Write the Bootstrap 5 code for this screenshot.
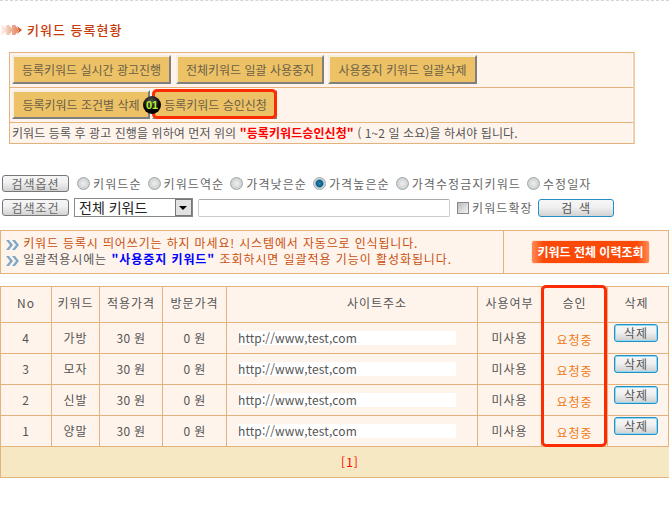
<!DOCTYPE html>
<html lang="ko"><head><meta charset="utf-8"><title>키워드 등록현황</title>
<link href="https://cdn.jsdelivr.net/npm/bootstrap@5.3.0/dist/css/bootstrap.min.css" rel="stylesheet">
<style>
html,body{margin:0;background:#fff}
body{width:669px;height:522px;overflow:hidden;font:12px/14px "Noto Sans CJK KR","Liberation Sans",sans-serif;color:#555;position:relative}
.topline{border-top:1px dashed #d4d4d4;height:22px}
.pagetitle{height:30px;font-weight:500;font-size:13px;line-height:16px;color:#c63c0c;gap:4px;letter-spacing:1px}
.titleicon{margin-top:1px}
.panel-box{margin-left:9px;width:626px;height:92px;border:1px solid #e3b27d;border-right:2px solid #f0cfa8;background:#fff4ec;box-shadow:inset -1px 0 #fff}
.panel-row{height:35px;padding:2px 0 0 2px;border-bottom:1px solid #e3b27d;gap:5px}
.panel-row2{gap:0;position:relative}
.panel-note{height:20px;line-height:19px;padding-left:2px;white-space:nowrap;color:#555;letter-spacing:.08px}
.panel-note b{color:#f00}
.bevel{height:29px;background:#edc267;color:#6a5f45;border:2px solid;border-color:#f6eee0 #7f7f7f #7f7f7f #f6eee0;font-size:12px;padding:0;line-height:24px;border-radius:0;text-align:center}
.w1{width:159px}.w2{width:148px}.w3{width:149px;margin-left:-1px}.w4{width:138px}.w5{width:125px;margin-left:2px;padding-left:2px}
.redmark{position:absolute;border:3px solid #fb2c04;border-radius:5px;pointer-events:none}
.mark-a{left:142px;top:1px;width:125px;height:30px}
.num-dot{position:absolute;left:133px;top:8px;width:18px;height:18px;border-radius:50%;background:radial-gradient(circle at 45% 30%,#555,#000 60%);color:#b6f52b;font:bold 11px/18px "Liberation Sans",sans-serif;text-align:center}
.search-row{gap:5px;margin-left:2px;height:17px}
.s1{margin-top:31px}.s2{margin-top:6px;height:19px}
.gbtn{height:17px;width:67px;margin-right:2px;padding:0;border:1px solid #777;border-radius:3px;background:linear-gradient(#f6f6f6,#f0f0f0 45%,#d2d2d2);color:#666;font-size:12px;line-height:14px;letter-spacing:1px}
.gopt{gap:3px;color:#666;margin-left:1px;white-space:nowrap;letter-spacing:1.1px}
.rad{appearance:none;width:13px;height:13px;border-radius:50%;border:1px solid #9aa;background:radial-gradient(circle,#eee,#c4c4c4);margin:0}
.rad:checked{background:radial-gradient(circle,#2a8fc0 0,#0a5a88 40%,#d8d8d8 60%)}
.kwsel{width:119px;height:19px;margin-left:-2px;border:1px solid #888;background:#fff;font-size:14px;line-height:17px;color:#222;padding-left:4px;position:relative;white-space:nowrap}
.kwsel i{position:absolute;right:0;top:0;width:17px;height:17px;background:#e2e2e2;border:1px solid #777}
.kwsel i::after{content:"";position:absolute;left:3px;top:6px;border:4px solid transparent;border-top:4px solid #000;border-bottom:0}
.kwtxt{width:252px;height:18px;border:1px solid #ccc;border-top-color:#aaa;border-radius:2px;padding:0;background:#fff}
.kwchk{margin-left:2px}
.chk{appearance:none;width:12px;height:12px;border:1px solid #888;background:linear-gradient(135deg,#bbb,#f4f4f4);margin:0}
.bluebtn{width:76px;height:18px;padding:0;margin-left:0;border:1px solid #2590c4;border-radius:3px;background:linear-gradient(#f6f6f6,#f0f0f0 45%,#d2d2d2);color:#555;font-size:12px;line-height:14px}
.notice-box{margin-top:13px;height:44px;border:1px solid #e3b27d;background:#fff4ec;color:#c94f0e;width:669px}
.notice-left{width:503px;padding:4px 0 0 5px;line-height:16px;border-right:1px solid #e3b27d;white-space:nowrap;height:42px;letter-spacing:.85px}
.notice-left .gr{color:#555}.notice-left b{color:#00f}
.notice-second{letter-spacing:.93px}
.notice-right{flex:1}
.fire{width:119px;height:24px;margin-left:27px;padding:0;border:1px solid #ffe3d0;border-radius:3px;background:linear-gradient(90deg,#ff8a55,#fb4a08 10%,#fb4a08 90%,#ff8a55);color:#fff;font-weight:700;font-size:12px;line-height:20px}
.tablewrap{position:relative;margin-top:12px;width:669px}
.dtable{table-layout:fixed;width:669px;margin:0;border-collapse:collapse;color:#555;--bs-table-bg:#fff4ec;--bs-table-color:#555}
.dtable td,.dtable th{border:1px solid #e3b27d;padding:0;text-align:center;vertical-align:middle;font-weight:400;background:#fff4ec;color:#555;font-size:12px;height:31px;box-shadow:none;letter-spacing:1px}
.dtable thead th{height:36px;padding-bottom:3px}
.dtable thead th.sitehead{padding-left:50px}
.dtable td.pricecell{letter-spacing:.3px}
.dtable td.pager{background:#f6e8c2;color:#f00;height:31px;padding-left:30px}
.dtable td.lastcol,.dtable th.lastcol{border-right:3px solid #e3b27d}
.dtable thead th.lastcol{padding-right:3px}
.urlbar{display:block;background:#fff;margin-left:11px;width:218px;height:14px;text-align:left;line-height:14px;letter-spacing:.1px;color:#555}
.req{color:#f07a14;display:block;padding-top:3px}
.delbtn{display:block;width:44px;height:18px;margin:0 0 11px 6px;padding:0;border:1px solid #2590c4;box-shadow:inset 0 0 0 1px #8fd8f4;border-radius:3px;background:linear-gradient(#f6f6f6,#f0f0f0 45%,#cfcfcf);color:#555;font-size:12px;line-height:13px;letter-spacing:1px}
.mark-b{left:541px;top:-1px;width:66px;height:162px}
</style></head><body>
<div class="topline"></div>
<div class="pagetitle d-flex align-items-start">
<svg class="titleicon" width="23" height="14" viewBox="0 0 23 14" aria-hidden="true"><defs><linearGradient id="fadeg"><stop offset="0" stop-color="#fff"/><stop offset="1" stop-color="#d8501a"/></linearGradient></defs><path d="M0 2h3l4 5-4 5H0zM6 2h3l4 5-4 5H6zM12 2h3l4 5-4 5h-3z" fill="url(#fadeg)" opacity=".75"/><path d="M17 3l5 4-5 4 2-4z" fill="#d8501a"/></svg>
<span>키워드 등록현황</span></div>
<div class="panel-box">
<div class="panel-row d-flex">
<button type="button" class="btn bevel w1">등록키워드 실시간 광고진행</button>
<button type="button" class="btn bevel w2">전체키워드 일괄 사용중지</button>
<button type="button" class="btn bevel w3">사용중지 키워드 일괄삭제</button>
</div>
<div class="panel-row panel-row2 d-flex">
<button type="button" class="btn bevel w4">등록키워드 조건별 삭제</button>
<button type="button" class="btn bevel w5">등록키워드 승인신청</button>
<span class="redmark mark-a"></span><span class="num-dot">01</span>
</div>
<div class="panel-note">키워드 등록 후 광고 진행을 위하여 먼저 위의 <b>"등록키워드승인신청"</b> ( 1~2 일 소요)을 하셔야 됩니다.</div>
</div>
<div class="search-row s1 d-flex align-items-center">
<button type="button" class="btn gbtn">검색옵션</button>
<label class="gopt d-flex align-items-center"><input class="rad" type="radio" name="o">키워드순</label>
<label class="gopt d-flex align-items-center"><input class="rad" type="radio" name="o">키워드역순</label>
<label class="gopt d-flex align-items-center"><input class="rad" type="radio" name="o">가격낮은순</label>
<label class="gopt d-flex align-items-center"><input class="rad" type="radio" name="o" checked>가격높은순</label>
<label class="gopt d-flex align-items-center"><input class="rad" type="radio" name="o">가격수정금지키워드</label>
<label class="gopt d-flex align-items-center"><input class="rad" type="radio" name="o">수정일자</label>
</div>
<div class="search-row s2 d-flex align-items-center">
<button type="button" class="btn gbtn">검색조건</button>
<div class="kwsel">전체 키워드<i></i></div>
<input class="kwtxt" type="text" aria-label="검색어">
<label class="gopt kwchk d-flex align-items-center"><input class="chk" type="checkbox">키워드확장</label>
<button type="button" class="btn bluebtn">검 &nbsp;색</button>
</div>
<div class="notice-box d-flex">
<div class="notice-left">
<div><svg width="13" height="10" viewBox="0 0 13 10" aria-hidden="true"><path d="M0 0h3l4 5-4 5H0l4-5zM6 0h3l4 5-4 5H6l4-5z" fill="#7fa8c8"/></svg> 키워드 등록시 띄어쓰기는 하지 마세요! 시스템에서 자동으로 인식됩니다.</div>
<div class="notice-second"><svg width="13" height="10" viewBox="0 0 13 10" aria-hidden="true"><path d="M0 0h3l4 5-4 5H0l4-5zM6 0h3l4 5-4 5H6l4-5z" fill="#7fa8c8"/></svg> <span class="gr">일괄적용시에는</span> <b>"사용중지 키워드"</b> 조회하시면 일괄적용 기능이 활성화됩니다.</div>
</div>
<div class="notice-right d-flex align-items-center"><button type="button" class="btn fire">키워드 전체 이력조회</button></div>
</div>
<div class="tablewrap">
<table class="table dtable">
<colgroup><col style="width:51px"><col style="width:48px"><col style="width:63px"><col style="width:64px"><col style="width:251px"><col style="width:64px"><col style="width:66px"><col style="width:62px"></colgroup>
<thead><tr><th>No</th><th>키워드</th><th>적용가격</th><th>방문가격</th><th class="sitehead">사이트주소</th><th>사용여부</th><th>승인</th><th class="lastcol">삭제</th></tr></thead>
<tbody>
<tr><td>4</td><td>가방</td><td class="pricecell">30 원</td><td class="pricecell">0 원</td><td><span class="urlbar">http://www,test,com</span></td><td>미사용</td><td><span class="req">요청중</span></td><td class="lastcol"><button type="button" class="btn delbtn">삭제</button></td></tr>
<tr><td>3</td><td>모자</td><td class="pricecell">30 원</td><td class="pricecell">0 원</td><td><span class="urlbar">http://www,test,com</span></td><td>미사용</td><td><span class="req">요청중</span></td><td class="lastcol"><button type="button" class="btn delbtn">삭제</button></td></tr>
<tr><td>2</td><td>신발</td><td class="pricecell">30 원</td><td class="pricecell">0 원</td><td><span class="urlbar">http://www,test,com</span></td><td>미사용</td><td><span class="req">요청중</span></td><td class="lastcol"><button type="button" class="btn delbtn">삭제</button></td></tr>
<tr><td>1</td><td>양말</td><td class="pricecell">30 원</td><td class="pricecell">0 원</td><td><span class="urlbar">http://www,test,com</span></td><td>미사용</td><td><span class="req">요청중</span></td><td class="lastcol"><button type="button" class="btn delbtn">삭제</button></td></tr>
<tr><td class="pager" colspan="8">[1]</td></tr>
</tbody></table>
<span class="redmark mark-b"></span>
</div>
</body></html>
